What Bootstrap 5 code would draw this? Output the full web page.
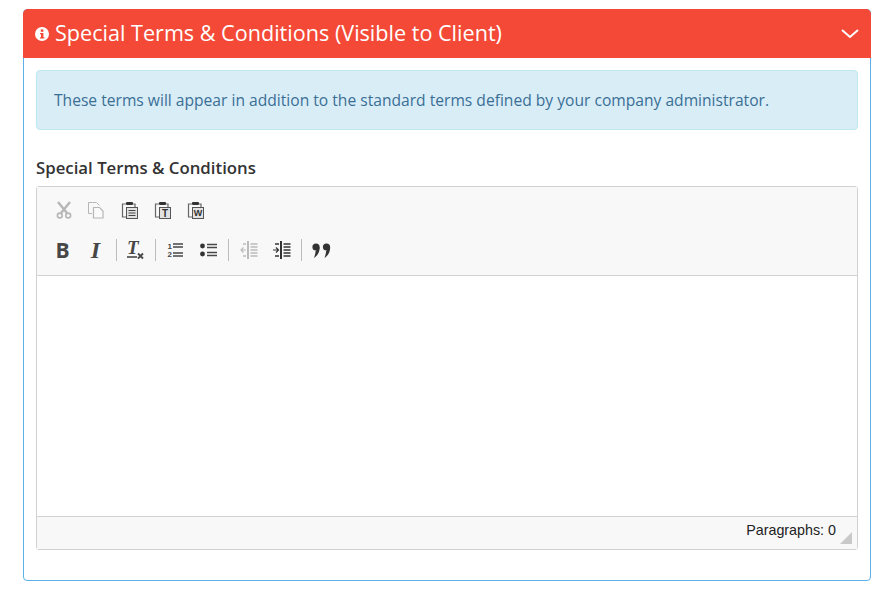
<!DOCTYPE html>
<html lang="en">
<head>
    <meta charset="UTF-8">
    <title>Special Terms</title>
    <link href="https://cdn.jsdelivr.net/npm/bootstrap@5.3.0/dist/css/bootstrap.min.css" rel="stylesheet">
    <style>
        body {
            background: #fff;
            font-family: "Open Sans", sans-serif;
        }
        .page-wrap {
            padding: 9px 21px 18px 23px;
        }
        .terms-panel {
            border: 1px solid #5eb1e8;
            border-radius: 4px;
            height: 572px;
        }
        .terms-head {
            background: #f44936;
            color: #fff;
            height: 49px;
            margin: -1px -1px 0 -1px;
            border: 0;
            border-radius: 4px 4px 0 0;
            padding: 0 12px;
            font-size: 21.6px;
            line-height: 48px;
        }
        .terms-title {
            margin: -1px 0 0 6px;
        }
        .terms-body {
            padding: 12px;
        }
        .terms-note {
            background: #d9edf7;
            border: 1px solid #bce8f1;
            color: #3a6f95;
            border-radius: 4px;
            height: 60px;
            margin: 0 0 26px 0;
            padding: 0 17px;
            font-size: 15.62px;
            line-height: 59px;
        }
        .terms-label {
            font-size: 16.8px;
            font-weight: 600;
            color: #333;
            line-height: 24px;
            margin: 0 0 6px 0;
            display: block;
        }
        .rte {
            border: 1px solid #d1d1d1;
            border-radius: 3px;
            height: 364px;
        }
        .rte-tools {
            background: #f8f8f8;
            border-bottom: 1px solid #d1d1d1;
            height: 89px;
            padding: 3px 0 0 10px;
        }
        .rte-row {
            height: 40px;
        }
        .rte-btn {
            width: 33px;
            height: 40px;
            color: #474747;
        }
        .rte-btn.off {
            opacity: .3;
        }
        .rte-btn.tight {
            width: 32px;
        }
        .rte-sep {
            width: 1px;
            height: 22px;
            background: #bcbcbc;
            margin: 0 3px;
        }
        .rte-letter {
            font-size: 21px;
            font-weight: 700;
            line-height: 1;
            padding-right: 2px;
        }
        .rte-italic {
            font-family: "Liberation Serif", serif;
            font-style: italic;
            font-size: 24px;
        }
        .rte-area {
            height: 240px;
            background: #fff;
        }
        .rte-foot {
            background: #f8f8f8;
            border-top: 1px solid #d1d1d1;
            height: 33px;
            padding: 0 5px 5px 0;
            font-family: "Liberation Sans", sans-serif;
            font-size: 14.3px;
            color: #222;
        }
        .rte-count {
            line-height: 26px;
            margin-right: 4px;
            align-self: flex-start;
        }
    </style>
</head>
<body>
<div class="page-wrap">
    <div class="card terms-panel">
        <div class="card-header terms-head d-flex align-items-center">
            <svg width="14" height="14" viewBox="0 0 14 14" class="flex-shrink-0">
                <circle cx="7" cy="7" r="7" fill="#fff"/>
                <rect x="5.8" y="2.4" width="2.6" height="2.4" fill="#f44936"/>
                <path d="M5 6h3.4v4.2h1v1.3H5v-1.3h1V7.3H5z" fill="#f44936"/>
            </svg>
            <span class="terms-title flex-grow-1">Special Terms &amp; Conditions (Visible to Client)</span>
            <svg width="18" height="12" viewBox="0 0 18 12">
                <path d="M1 2l8 7 8-7" fill="none" stroke="#fff" stroke-width="2"/>
            </svg>
        </div>
        <div class="card-body terms-body">
            <div class="alert terms-note" role="alert">These terms will appear in addition to the standard terms defined by your company administrator.</div>
            <label class="terms-label">Special Terms &amp; Conditions</label>
            <div class="rte">
                <div class="rte-tools">
                    <div class="rte-row d-flex align-items-center">
                        <div class="rte-btn off d-flex align-items-center justify-content-center">
                            <svg width="16" height="18" viewBox="0 0 16 18">
                                <path d="M2 1l9 11M14 1L5 12" stroke="#222" stroke-width="2.4" fill="none"/>
                                <circle cx="3.8" cy="14.5" r="2.4" fill="none" stroke="#222" stroke-width="1.6"/>
                                <circle cx="12.2" cy="14.5" r="2.4" fill="none" stroke="#222" stroke-width="1.6"/>
                            </svg>
                        </div>
                        <div class="rte-btn off d-flex align-items-center justify-content-center">
                            <svg width="18" height="18" viewBox="1 0 18 18">
                                <path d="M5.5 1.5h4l3 3M5 12.5H1.5v-11h4" fill="none" stroke="#222" stroke-width="1"/>
                                <path d="M6.5 6.5h6l3.5 3.5v7H6.5z" fill="#fff" stroke="#222" stroke-width="1.2"/>
                            </svg>
                        </div>
                        <div class="rte-btn d-flex align-items-center justify-content-center">
                            <svg width="18" height="18" viewBox="0 0 18 18">
                                <path d="M5 3H1.5v13H5M12 3h2v3" fill="none" stroke="#666" stroke-width="1.2"/>
                                <rect x="5" y="1" width="7" height="3" rx="1" fill="#333"/>
                                <rect x="5.5" y="6.5" width="11" height="11" fill="#e2e2e2" stroke="#555"/>
                                <path d="M7.5 9.5h7M7.5 12h7M7.5 14.5h7" stroke="#444" stroke-width="1.2"/>
                            </svg>
                        </div>
                        <div class="rte-btn d-flex align-items-center justify-content-center">
                            <svg width="18" height="18" viewBox="0 0 18 18">
                                <path d="M5 3H1.5v13H5M12 3h2v3" fill="none" stroke="#666" stroke-width="1.2"/>
                                <rect x="5" y="1" width="7" height="3" rx="1" fill="#333"/>
                                <rect x="5.5" y="6.5" width="11" height="11" fill="#e2e2e2" stroke="#555"/>
                                <text x="11" y="15.6" text-anchor="middle" font-family="Liberation Sans, sans-serif" font-weight="700" font-size="10" fill="#333">T</text>
                            </svg>
                        </div>
                        <div class="rte-btn d-flex align-items-center justify-content-center">
                            <svg width="18" height="18" viewBox="0 0 18 18">
                                <path d="M5 3H1.5v13H5M12 3h2v3" fill="none" stroke="#666" stroke-width="1.2"/>
                                <rect x="5" y="1" width="7" height="3" rx="1" fill="#333"/>
                                <rect x="5.5" y="6.5" width="11" height="11" fill="#e2e2e2" stroke="#555"/>
                                <text x="11" y="15.4" text-anchor="middle" font-family="Liberation Sans, sans-serif" font-weight="700" font-size="9" fill="#333">W</text>
                            </svg>
                        </div>
                    </div>
                    <div class="rte-row d-flex align-items-center">
                        <div class="rte-btn rte-letter d-flex align-items-center justify-content-center">B</div>
                        <div class="rte-btn rte-letter rte-italic d-flex align-items-center justify-content-center">I</div>
                        <div class="rte-sep"></div>
                        <div class="rte-btn tight d-flex align-items-center justify-content-center">
                            <svg width="18" height="28" viewBox="0 -4 18 28">
                                <text x="0" y="13.5" font-family="Liberation Serif, serif" font-style="italic" font-weight="700" font-size="19" fill="#474747">T</text>
                                <path d="M0 17h10" stroke="#474747" stroke-width="1.6"/>
                                <path d="M11 13.5l5 5M16 13.5l-5 5" stroke="#474747" stroke-width="1.8"/>
                            </svg>
                        </div>
                        <div class="rte-sep"></div>
                        <div class="rte-btn d-flex align-items-center justify-content-center">
                            <svg width="17" height="16" viewBox="0 0 17 16">
                                <text x="0.5" y="7" font-family="Liberation Sans, sans-serif" font-weight="700" font-size="8" fill="#474747">1</text>
                                <text x="0.5" y="15" font-family="Liberation Sans, sans-serif" font-weight="700" font-size="8" fill="#474747">2</text>
                                <path d="M6 2h10M6 5h10M6 11h10M6 14h10" stroke="#474747" stroke-width="1.5"/>
                            </svg>
                        </div>
                        <div class="rte-btn d-flex align-items-center justify-content-center">
                            <svg width="17" height="16" viewBox="0 0 17 16">
                                <circle cx="2.5" cy="4" r="2.4" fill="#333"/>
                                <circle cx="2.5" cy="12" r="2.4" fill="#333"/>
                                <path d="M7 2.5h10M7 5.5h10M7 10.5h10M7 13.5h10" stroke="#474747" stroke-width="1.5"/>
                            </svg>
                        </div>
                        <div class="rte-sep"></div>
                        <div class="rte-btn off d-flex align-items-center justify-content-center">
                            <svg width="18" height="18" viewBox="0 0 18 18">
                                <path d="M8 0v18" stroke="#333" stroke-width="2"/>
                                <path d="M10.5 3h7M10.5 6h7M10.5 9h7M10.5 12h7M10.5 15h7M3 3h3M3 15h3" stroke="#333" stroke-width="1.3"/>
                                <path d="M6 9H1M3.5 6.5L1 9l2.5 2.5" fill="none" stroke="#333" stroke-width="1.2"/>
                            </svg>
                        </div>
                        <div class="rte-btn d-flex align-items-center justify-content-center">
                            <svg width="18" height="18" viewBox="0 0 18 18">
                                <path d="M8 0v18" stroke="#333" stroke-width="2"/>
                                <path d="M10.5 3h7M10.5 6h7M10.5 9h7M10.5 12h7M10.5 15h7M2 3h4M2 15h4" stroke="#333" stroke-width="1.3"/>
                                <path d="M0 9h5.5M3 6.5L5.5 9 3 11.5" fill="none" stroke="#333" stroke-width="1.2"/>
                            </svg>
                        </div>
                        <div class="rte-sep"></div>
                        <div class="rte-btn d-flex align-items-center justify-content-center">
                            <svg width="19" height="15" viewBox="0 0 19 15">
                                <circle cx="4" cy="4" r="3.6" fill="#333"/>
                                <path d="M7.6 4C8 9 5 13 2 15c1-3 1.6-5 1.6-7z" fill="#333"/>
                                <circle cx="14.5" cy="4" r="3.6" fill="#333"/>
                                <path d="M18.1 4c.4 5-2.6 9-5.6 11 1-3 1.6-5 1.6-7z" fill="#333"/>
                            </svg>
                        </div>
                    </div>
                </div>
                <div class="rte-area"></div>
                <div class="rte-foot d-flex justify-content-end align-items-end">
                    <span class="rte-count">Paragraphs: 0</span>
                    <svg width="12" height="12" viewBox="0 0 12 12">
                        <path d="M12 0v12H0z" fill="#c9c9c9"/>
                    </svg>
                </div>
            </div>
        </div>
    </div>
</div>
<script src="https://cdn.jsdelivr.net/npm/bootstrap@5.3.0/dist/js/bootstrap.bundle.min.js"></script>
</body>
</html>
